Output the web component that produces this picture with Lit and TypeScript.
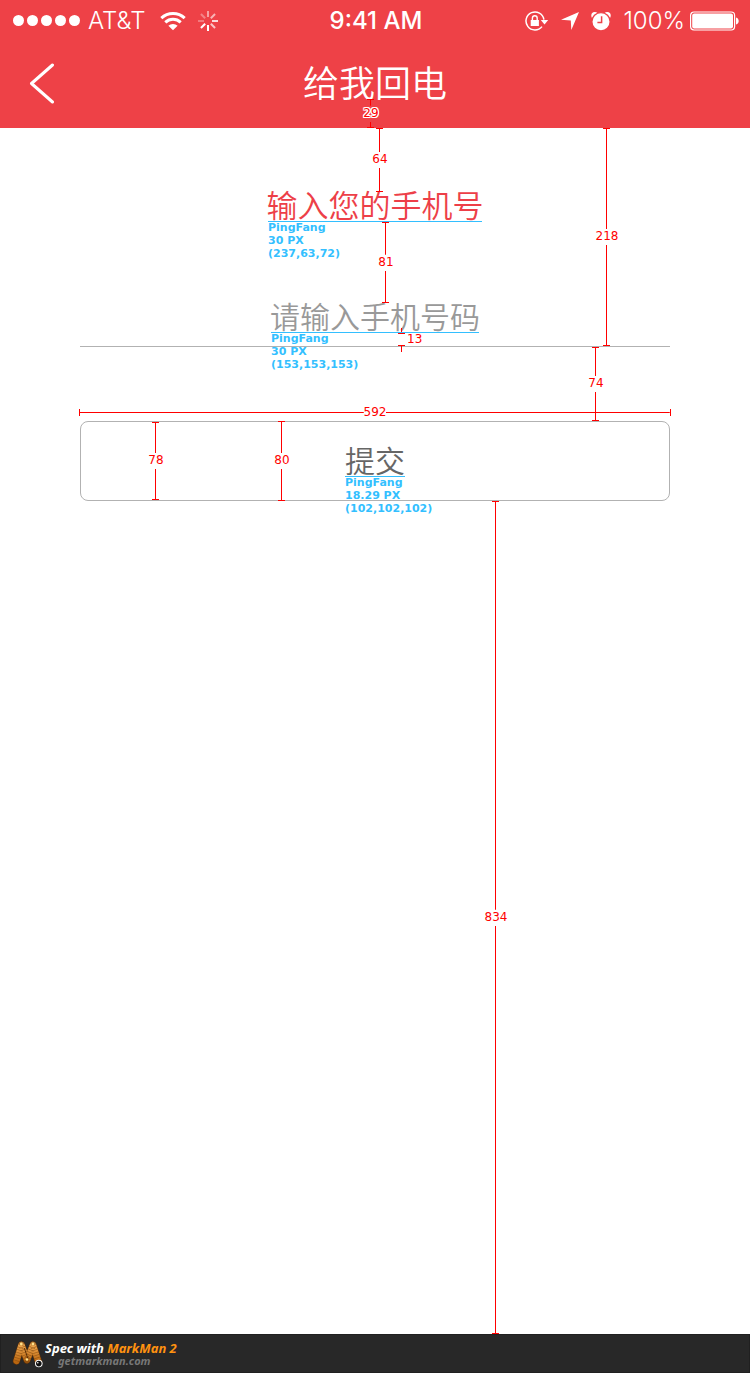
import { LitElement, html, css, svg } from "lit";
import { customElement, property } from "lit/decorators.js";
import { styleMap } from "lit/directives/style-map.js";

interface Span {
  x: number;
  y: number;
  length: number;
  label: string;
  halo?: boolean;
}

interface Note {
  x: number;
  y: number;
  width: number;
  size: string;
  color: string;
}

const SPANS: Span[] = [
  { x: 370, y: 99, length: 29, label: "29", halo: true },
  { x: 379, y: 128, length: 64, label: "64" },
  { x: 385, y: 222, length: 81, label: "81" },
  { x: 606, y: 128, length: 218, label: "218" },
  { x: 595, y: 347, length: 74, label: "74" },
  { x: 155, y: 422, length: 78, label: "78" },
  { x: 281, y: 421, length: 80, label: "80" },
];

const NOTES: Note[] = [
  { x: 268, y: 221, width: 214, size: "30 PX", color: "(237,63,72)" },
  { x: 271, y: 332, width: 208, size: "30 PX", color: "(153,153,153)" },
  { x: 345, y: 476, width: 60, size: "18.29 PX", color: "(102,102,102)" },
];

const SIGNAL = [1, 2, 3, 4, 5];
const SPOKES = [0.5, 0.6, 0.8, 0.7, 1, 1, 0.3, 0.35];

@customElement("status-bar")
class StatusBar extends LitElement {
  static styles = css`
    :host {
      display: grid;
      grid-template-columns: 1fr auto 1fr;
      align-items: center;
      height: 41px;
      padding: 0 11px 0 13px;
      font: 400 24px/41px Inter, Roboto, sans-serif;
      color: #fff;
    }
    svg {
      display: block;
      flex: none;
    }
    .side {
      display: flex;
      align-items: center;
    }
    .end {
      justify-content: flex-end;
    }
    .dots {
      display: flex;
      gap: 3px;
      margin-right: 8px;
    }
    .dot {
      width: 11px;
      height: 11px;
      border-radius: 50%;
      background: #fff;
    }
    .thin {
      font-weight: 300;
    }
    .carrier {
      margin-right: 15px;
    }
    .clock {
      font-weight: 500;
    }
    .wifi,
    .lock,
    .arrow,
    .alarm {
      margin-right: 12px;
    }
    .percent {
      margin-right: 5px;
    }
  `;

  render() {
    return html`
      <div class="side">
        <div class="dots">${SIGNAL.map(() => html`<span class="dot"></span>`)}</div>
        <span class="thin carrier">AT&amp;T</span>
        <svg class="wifi" width="26" height="20" viewBox="0 0 26 20" fill="none" stroke="#fff" stroke-width="3">
          <path d="M1.3 7.2a17 17 0 0 1 23.4 0" />
          <path d="M5.3 11.4a11.3 11.3 0 0 1 15.4 0" />
          <path d="M13 19.2l-4.6-4.4a6.6 6.6 0 0 1 9.2 0z" fill="#fff" stroke="none" />
        </svg>
        <svg width="20" height="20" viewBox="-10 -10 20 20" stroke="#fff" stroke-width="2">
          ${SPOKES.map(
            (o, i) => svg`<path d="M0-4V-10" stroke-opacity=${o} transform="rotate(${i * 45})" />`,
          )}
        </svg>
      </div>
      <span class="clock">9:41 AM</span>
      <div class="side end">
        <svg class="lock" width="24" height="20" viewBox="0 0 24 20" fill="none" stroke="#fff">
          <path d="M17 15.6A9 9 0 1 1 18.9 8.6" stroke-width="1.5" />
          <path d="M15.8 9h7.4l-3.7 4.4z" fill="#fff" stroke="none" />
          <path d="M5.7 9h8.2v6H5.7z" fill="#fff" stroke="none" />
          <path d="M7.4 9.2V7.2a2.4 2.4 0 0 1 4.8 0v2" stroke-width="1.4" />
        </svg>
        <svg class="arrow" width="18" height="18" viewBox="0 0 18 18" fill="#fff">
          <path d="M18 0L10.3 18 9.8 8.6 0 7.8z" />
        </svg>
        <svg class="alarm" width="20" height="20" viewBox="0 0 20 20" fill="#fff">
          <circle cx="3.8" cy="4.4" r="3.5" />
          <circle cx="16.2" cy="4.4" r="3.5" />
          <circle cx="10" cy="10.8" r="9.2" stroke="#ee4147" stroke-width="1.4" />
          <path d="M10.6 5.2v6.2H6.4" fill="none" stroke="#ee4147" stroke-width="1.5" />
        </svg>
        <span class="thin percent">100%</span>
        <svg width="49" height="20" viewBox="0 0 49 20" fill="#fff">
          <rect x=".6" y="1" width="44" height="18" rx="3.4" fill="none" stroke="#fff" stroke-width="1.2" />
          <rect x="2.2" y="2.6" width="40.8" height="14.8" rx="2" />
          <path d="M46 6.4c3.6.8 3.6 6.4 0 7.2z" />
        </svg>
      </div>
    `;
  }
}

@customElement("span-mark")
class SpanMark extends LitElement {
  @property() label = "";
  @property({ type: Boolean, reflect: true }) halo = false;
  @property({ type: Boolean, reflect: true }) across = false;

  static styles = css`
    :host {
      display: flex;
      flex-direction: column;
      align-items: center;
      width: 7px;
      font: 12px/14px "DejaVu Sans", Verdana, sans-serif;
      color: #f00;
    }
    :host([across]) {
      flex-direction: row;
      width: auto;
      height: 7px;
    }
    .line {
      flex: 1;
      width: 7px;
      box-sizing: border-box;
      background: linear-gradient(#f00, #f00) center / 1px 100% no-repeat;
    }
    .first {
      border-top: 1px solid #f00;
    }
    .last {
      border-bottom: 1px solid #f00;
    }
    :host([across]) .line {
      width: auto;
      height: 7px;
      border: 0;
      background: linear-gradient(#f00, #f00) center / 100% 1px no-repeat;
    }
    :host([across]) .first {
      border-left: 1px solid #f00;
    }
    :host([across]) .last {
      border-right: 1px solid #f00;
    }
    .label {
      padding: 0 0 2px 1px;
      white-space: nowrap;
    }
    :host([across]) .label {
      padding-left: 0;
    }
    :host([halo]) .label {
      text-shadow: 1px 0 #fff, -1px 0 #fff, 0 1px #fff, 0 -1px #fff, 1px 1px #fff, -1px -1px #fff,
        1px -1px #fff, -1px 1px #fff;
    }
  `;

  render() {
    return html`
      <span class="line first"></span>
      <span class="label">${this.label}</span>
      <span class="line last"></span>
    `;
  }
}

@customElement("app-root")
class AppRoot extends LitElement {
  static styles = css`
    :host {
      position: relative;
      display: flex;
      flex-direction: column;
      min-height: 100vh;
      background: #fff;
      font-family: "Noto Sans CJK SC", "PingFang SC", sans-serif;
      font-weight: 350;
    }
    .top {
      background: #ee4147;
      color: #fff;
    }
    .nav {
      display: grid;
      grid-template-columns: 80px 1fr 80px;
      align-items: center;
      height: 87px;
    }
    .back {
      display: grid;
      place-items: center start;
      height: 87px;
      padding: 0 0 0 28px;
      border: 0;
      background: none;
    }
    .title {
      margin: 0;
      padding-bottom: 7px;
      text-align: center;
      font-size: 36px;
      font-weight: inherit;
      line-height: 44px;
    }
    .form {
      display: flex;
      flex-direction: column;
      padding: 54px 80px 0;
    }
    .caption {
      text-align: center;
      font-size: 31px;
      line-height: 44px;
      color: #ed3f48;
    }
    .phone,
    .submit {
      box-sizing: border-box;
      width: 100%;
      font-family: inherit;
      font-size: 30px;
      font-weight: inherit;
      text-align: center;
      background: none;
    }
    .phone {
      height: 58px;
      margin: 63px 0 74px;
      padding: 0 0 6px;
      border: 0;
      border-bottom: 1px solid #b2b2b2;
      border-radius: 0;
      color: #666;
    }
    .phone::placeholder {
      color: #999;
      opacity: 1;
    }
    .submit {
      height: 80px;
      padding: 0 0 4px;
      border: 1px solid #b2b2b2;
      border-radius: 8px;
      color: #666;
    }
    .rest {
      position: relative;
      flex: 1;
    }
    .mark {
      position: absolute;
      font-weight: 400;
      pointer-events: none;
    }
    .width {
      top: 409px;
      left: 79px;
      right: 79px;
    }
    .remaining {
      top: 0;
      bottom: 0;
      left: 492px;
    }
    .gap {
      display: flex;
      align-items: center;
      gap: 2px;
      top: 328px;
      left: 398px;
      font: 12px/14px "DejaVu Sans", Verdana, sans-serif;
      color: #f00;
    }
    .gap span {
      padding-bottom: 2px;
    }
    .note {
      box-shadow: inset 0 1px #33bfff;
      font: bold 11px/13px "DejaVu Sans", Verdana, sans-serif;
      color: #33bfff;
      white-space: nowrap;
    }
    .note span {
      display: block;
    }
    .foot {
      display: flex;
      align-items: center;
      gap: 1px;
      height: 39px;
      box-sizing: border-box;
      padding-left: 11px;
      border: 1px solid #202020;
      background: #282828;
      font: italic bold 13px/14px "Noto Sans", "Open Sans", sans-serif;
      color: #fff;
    }
    .site {
      display: block;
      padding-left: 13px;
      font-size: 11px;
      line-height: 11px;
      color: #777;
    }
    .brand {
      color: #ff9210;
    }
  `;

  render() {
    const body = "M4.5 21L9.5 5L15 20L21 5L26.5 22";
    return html`
      <header class="top">
        <status-bar></status-bar>
        <div class="nav">
          <button class="back" type="button" aria-label="返回">
            <svg width="28" height="44" viewBox="0 0 28 44" fill="none" stroke="#fff" stroke-width="3" stroke-linecap="round" stroke-linejoin="round">
              <path d="M24.5 2L3.5 20.5l21 18.5" />
            </svg>
          </button>
          <h1 class="title">给我回电</h1>
        </div>
      </header>
      <form class="form" @submit=${(e: Event) => e.preventDefault()}>
        <label class="caption" for="phone">输入您的手机号</label>
        <input class="phone" id="phone" type="tel" placeholder="请输入手机号码" />
        <button class="submit" type="submit">提交</button>
      </form>
      <div class="rest">
        <span-mark class="mark remaining" label="834"></span-mark>
      </div>
      <footer class="foot">
        <svg width="32" height="28" viewBox="0 0 32 28" fill="none" stroke-linecap="round" stroke-linejoin="round">
          <defs>
            <linearGradient id="amber" x1="0" y1="0" x2="0" y2="1">
              <stop offset="0" stop-color="#f0a850" />
              <stop offset="1" stop-color="#b8650f" />
            </linearGradient>
          </defs>
          <path d=${body} stroke="#5c3008" stroke-width="7.4" />
          <path d=${body} stroke="url(#amber)" stroke-width="6.2" />
          <path d=${body} stroke="#7a420c" stroke-width="6.2" stroke-dasharray=".7 2" stroke-linecap="butt" opacity=".6" />
          <path d="M12.5 8.5L16 19" stroke="#5c3008" stroke-width="1" />
          <g fill="#ffe08a"><circle cx="9.3" cy="4" r="1.4" /><circle cx="21" cy="4" r="1.4" /><circle cx="15" cy="19.5" r="1.3" /></g>
          <circle cx="26.8" cy="23.5" r="3.8" fill="#fff" />
          <circle cx="26.8" cy="23.6" r="2.8" fill="#111" />
          <circle cx="25.8" cy="22.7" r=".8" fill="#fff" />
        </svg>
        <div>
          <span>Spec with <span class="brand">MarkMan 2</span></span>
          <span class="site">getmarkman.com</span>
        </div>
      </footer>
      ${SPANS.map(
        (s) => html`<span-mark
          class="mark"
          label=${s.label}
          ?halo=${s.halo}
          style=${styleMap({ left: `${s.x - 3}px`, top: `${s.y}px`, height: `${s.length}px` })}
        ></span-mark>`,
      )}
      <span-mark class="mark width" across label="592"></span-mark>
      <div class="mark gap">
        <svg width="7" height="24" viewBox="0 0 7 24" stroke="#f00">
          <path d="M3.5 0v5M0 5.5h7M0 17.5h7M3.5 18v6" />
        </svg>
        <span>13</span>
      </div>
      ${NOTES.map(
        (n) => html`<div
          class="mark note"
          style=${styleMap({ left: `${n.x}px`, top: `${n.y}px`, width: `${n.width}px` })}
        >
          <span>PingFang</span><span>${n.size}</span><span>${n.color}</span>
        </div>`,
      )}
    `;
  }
}
